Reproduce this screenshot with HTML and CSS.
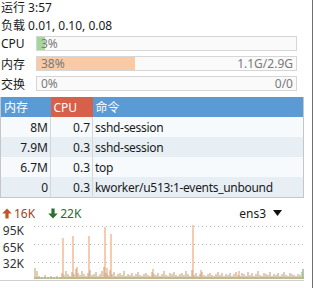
FILE: index.html
```html
<!DOCTYPE html>
<html lang="zh">
<head>
    <meta charset="utf-8">
    <link rel="stylesheet" href="styles.css">
</head>
<body>
    <div class="app">
        <div class="info">
            <div>运行 3:57</div>
            <div>负载 0.01, 0.10, 0.08</div>
        </div>

        <div class="meters">
            <div class="meter">
                <span class="meter-label">CPU</span>
                <div class="bar">
                    <div class="fill cpu" style="width: 3%"></div>
                    <span>3%</span>
                    <span></span>
                </div>
            </div>
            <div class="meter">
                <span class="meter-label">内存</span>
                <div class="bar">
                    <div class="fill mem" style="width: 38%"></div>
                    <span>38%</span>
                    <span>1.1G/2.9G</span>
                </div>
            </div>
            <div class="meter">
                <span class="meter-label">交换</span>
                <div class="bar">
                    <div class="fill" style="width: 0%"></div>
                    <span>0%</span>
                    <span>0/0</span>
                </div>
            </div>
        </div>

        <table class="procs">
            <colgroup>
                <col class="col-mem">
                <col class="col-cpu">
                <col>
            </colgroup>
            <thead>
                <tr>
                    <th>内存</th>
                    <th class="sorted">CPU</th>
                    <th>命令</th>
                </tr>
            </thead>
            <tbody>
                <tr><td class="num">8M</td><td class="num">0.7</td><td class="cmd">sshd-session</td></tr>
                <tr><td class="num">7.9M</td><td class="num">0.3</td><td class="cmd">sshd-session</td></tr>
                <tr><td class="num">6.7M</td><td class="num">0.3</td><td class="cmd">top</td></tr>
                <tr><td class="num">0</td><td class="num">0.3</td><td class="cmd">kworker/u513:1-events_unbound</td></tr>
            </tbody>
        </table>

        <div class="net">
            <svg class="arrow" width="10" height="11" viewBox="0 0 10 11"><path d="M5 0.5L9.8 5.5H6.6V10.5H3.4V5.5H0.2Z" fill="#c4532a"/></svg>
            <span class="up">16K</span>
            <svg class="arrow down-arrow" width="10" height="11" viewBox="0 0 10 11"><path d="M5 10.5L9.8 5.5H6.6V0.5H3.4V5.5H0.2Z" fill="#2f6f2f"/></svg>
            <span class="down">22K</span>
            <span class="iface">ens3</span>
            <svg class="caret" width="9" height="6" viewBox="0 0 9 6"><path d="M0 0H9L4.5 6Z" fill="#111"/></svg>
        </div>

        <div class="chart">
            <div class="axis">
                <span>95K</span>
                <span>65K</span>
                <span>32K</span>
            </div>
            <svg class="plot" width="270" height="58" viewBox="0 0 270 58">
                <g stroke="#b9b9b9" stroke-width="1" stroke-dasharray="1 3">
                    <path d="M0 4.5H270M0 22.5H270M0 40.5H270"/>
                </g>
                <rect x="0" y="55" width="270" height="2" fill="#bcd0b4"/>
                <path stroke="#f3b994" stroke-opacity="0.75" stroke-width="2" d="M29 57V16M39 57V14M55 57V14M71 57V5M77 57V12M159 57V3M43 57V45M73 57V46M119 57V47M167 57V48M205 57V49"/>
                <path stroke="#c4a678" stroke-opacity="0.85" stroke-width="1.3" d="M1 57v-11M3 57v-8M5 57v-3M8 57v-2M11 57v-4M14 57v-2M17 57v-3M20 57v-2M23 57v-3M26 57v-2M28 57v-6M30 57v-4M32 57v-8M34 57v-5M36 57v-3M38 57v-7M40 57v-5M42 57v-10M44 57v-6M46 57v-4M48 57v-8M50 57v-5M52 57v-3M54 57v-6M56 57v-9M58 57v-4M60 57v-5M62 57v-7M64 57v-3M66 57v-5M68 57v-8M70 57v-12M72 57v-6M74 57v-4M76 57v-9M78 57v-5M80 57v-7M82 57v-3M84 57v-5M86 57v-6M88 57v-4M90 57v-8M92 57v-3M94 57v-5M96 57v-4M98 57v-6M100 57v-3M102 57v-5M104 57v-7M106 57v-4M108 57v-3M110 57v-5M112 57v-6M114 57v-4M116 57v-3M118 57v-7M120 57v-5M122 57v-4M124 57v-6M126 57v-3M128 57v-5M130 57v-8M132 57v-4M134 57v-3M136 57v-6M138 57v-5M140 57v-7M142 57v-4M144 57v-3M146 57v-5M148 57v-6M150 57v-4M152 57v-8M154 57v-5M156 57v-3M158 57v-9M160 57v-4M162 57v-6M164 57v-3M166 57v-5M168 57v-7M170 57v-4M172 57v-3M174 57v-5M176 57v-6M178 57v-4M180 57v-3M182 57v-5M184 57v-7M186 57v-4M188 57v-6M190 57v-3M192 57v-5M194 57v-4M196 57v-6M198 57v-3M200 57v-5M202 57v-7M204 57v-4M206 57v-3M208 57v-6M210 57v-5M212 57v-3M214 57v-7M216 57v-4M218 57v-6M220 57v-3M222 57v-5M224 57v-8M226 57v-4M228 57v-3M230 57v-6M232 57v-5M234 57v-4M236 57v-7M238 57v-3M240 57v-5M242 57v-4M244 57v-6M246 57v-3M248 57v-5M250 57v-7M252 57v-4M254 57v-3M256 57v-6M258 57v-5M260 57v-4M262 57v-3M264 57v-5M266 57v-4M268 57v-7"/>
                <path stroke="#8fbf8c" stroke-width="1.5" d="M269 57v-10"/>
            </svg>
        </div>
    </div>
</body>
</html>
```

FILE: styles.css
```css
body {
    margin: 0;
    font-family: "Noto Sans", "Noto Sans CJK SC", sans-serif;
    font-size: 12px;
    color: #1a1a1a;
    background-color: #fff;
}

.app {
    width: 312px;
    height: 288px;
    border-right: 1px solid #707070;
}

.info {
    padding-left: 1px;
    line-height: 16px;
}

.info div + div {
    margin-top: 2px;
}

.meters {
    display: flex;
    flex-direction: column;
    gap: 5px;
    margin-top: 2px;
}

.meter {
    display: flex;
    align-items: center;
    height: 15px;
}

.meter-label {
    width: 36px;
    padding-left: 1px;
    box-sizing: border-box;
}

.bar {
    position: relative;
    display: flex;
    justify-content: space-between;
    align-items: center;
    width: 261px;
    height: 15px;
    box-sizing: border-box;
    padding: 0 3px 0 4px;
    border: 1px solid #d6d6d6;
    background-color: #fafafa;
    color: #7a7a7a;
    line-height: 13px;
}

.bar span {
    position: relative;
}

.fill {
    position: absolute;
    left: 0;
    top: 0;
    bottom: 0;
}

.fill.cpu {
    background-color: #a7d59e;
}

.fill.mem {
    background-color: #f8cba6;
}

.procs {
    width: 304px;
    margin-top: 6px;
    border-collapse: collapse;
    table-layout: fixed;
    border: 1px solid #c6c6c6;
    border-top: none;
}

.col-mem {
    width: 50px;
}

.col-cpu {
    width: 42px;
}

.procs th,
.procs td {
    height: 20px;
    padding: 0 2px 0 3px;
    white-space: nowrap;
    overflow: hidden;
}

.procs th {
    text-align: left;
    font-weight: normal;
    color: #fff;
    background-color: #5b9bd5;
}

.procs th.sorted {
    background-color: #d7604b;
}

.procs td.num {
    text-align: right;
    border-right: 1px solid #d6d6d6;
}

.procs td.cmd {
    padding-left: 2px;
    letter-spacing: -0.3px;
}

.procs tbody tr:nth-child(odd) td {
    background-color: #f6fafd;
}

.procs tbody tr:nth-child(even) td {
    background-color: #e7eff5;
}

.net {
    display: flex;
    align-items: center;
    height: 16px;
    margin-top: 7px;
    padding-left: 2px;
}

.arrow {
    margin-right: 2px;
}

.up {
    color: #9b4326;
}

.down-arrow {
    margin-left: 13px;
}

.down {
    color: #2d6a2f;
}

.iface {
    margin-left: auto;
    margin-right: 7px;
}

.caret {
    margin-right: 30px;
}

.chart {
    display: flex;
    width: 304px;
    height: 58px;
    margin-top: 1px;
    border-bottom: 1px solid #cfcfcf;
}

.axis {
    display: flex;
    flex-direction: column;
    width: 34px;
    box-sizing: border-box;
    padding: 1px 10px 0 0;
    text-align: right;
    line-height: 16.5px;
    color: #333;
}

.plot {
    display: block;
}
```
